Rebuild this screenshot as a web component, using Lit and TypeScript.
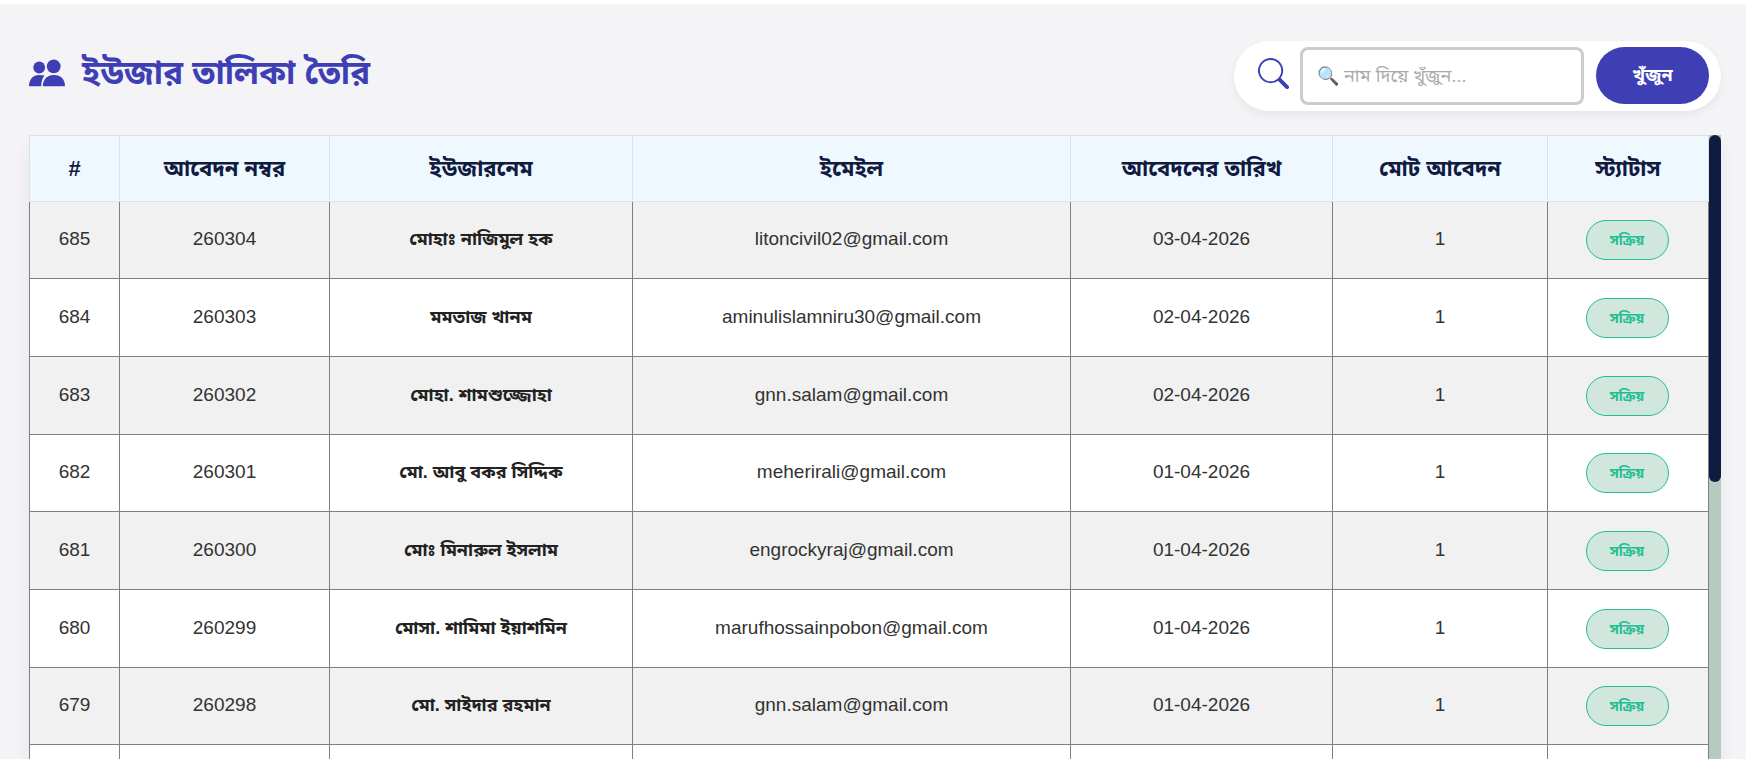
import { LitElement, html, css } from "lit";
import { customElement, property } from "lit/decorators.js";

interface User {
  id: number;
  application: number;
  name: string;
  email: string;
  date: string;
  total: number;
}

const users: User[] = [
  { id: 685, application: 260304, name: "মোহাঃ নাজিমুল হক", email: "litoncivil02@gmail.com", date: "03-04-2026", total: 1 },
  { id: 684, application: 260303, name: "মমতাজ খানম", email: "aminulislamniru30@gmail.com", date: "02-04-2026", total: 1 },
  { id: 683, application: 260302, name: "মোহা. শামশুজ্জোহা", email: "gnn.salam@gmail.com", date: "02-04-2026", total: 1 },
  { id: 682, application: 260301, name: "মো. আবু বকর সিদ্দিক", email: "meherirali@gmail.com", date: "01-04-2026", total: 1 },
  { id: 681, application: 260300, name: "মোঃ মিনারুল ইসলাম", email: "engrockyraj@gmail.com", date: "01-04-2026", total: 1 },
  { id: 680, application: 260299, name: "মোসা. শামিমা ইয়াশমিন", email: "marufhossainpobon@gmail.com", date: "01-04-2026", total: 1 },
  { id: 679, application: 260298, name: "মো. সাইদার রহমান", email: "gnn.salam@gmail.com", date: "01-04-2026", total: 1 },
];

@customElement("user-search")
export class UserSearch extends LitElement {
  static styles = css`
    :host { display: block; }
    .search {
      display: flex;
      align-items: flex-start;
      padding: 6px 12px 6px 24px;
      background: #fff;
      border-radius: 50px;
      box-shadow: 0 4px 10px rgba(0, 0, 0, 0.06);
    }
    .icon { display: flex; align-items: center; width: 32px; height: 52px; margin-right: 10px; color: #3f3fb5; }
    .box {
      box-sizing: border-box;
      width: 284px;
      height: 58px;
      margin-right: 12px;
      padding: 0 14px;
      border: 3px solid #ccc;
      border-radius: 8px;
      background: #fff;
      font: 18px "Liberation Sans", "Noto Sans Bengali", sans-serif;
      color: #333;
    }
    .box::placeholder { color: #aaa; }
    .go {
      width: 113px;
      height: 57px;
      border: 0;
      border-radius: 30px;
      background: #3f3fb5;
      color: #fff;
      font: bold 18px "Liberation Sans", "Noto Sans Bengali", sans-serif;
      cursor: pointer;
    }
  `;

  render() {
    return html`
      <form class="search" role="search" @submit=${(e: Event) => e.preventDefault()}>
        <label class="icon" for="name" aria-label="নাম">
          <svg viewBox="0 0 16 16" width="31" height="31" fill="currentColor" aria-hidden="true">
            <path d="M11.742 10.344a6.5 6.5 0 1 0-1.397 1.398h-.001q.044.06.098.115l3.85 3.85a1 1 0 0 0 1.415-1.414l-3.85-3.85a1 1 0 0 0-.115-.1zM12 6.5a5.5 5.5 0 1 1-11 0 5.5 5.5 0 0 1 11 0" />
          </svg>
        </label>
        <input class="box" id="name" type="text" placeholder="🔍 নাম দিয়ে খুঁজুন..." />
        <button class="go" type="submit">খুঁজুন</button>
      </form>
    `;
  }
}

@customElement("user-table")
export class UserTable extends LitElement {
  @property({ attribute: false }) users: User[] = [];

  static styles = css`
    :host { display: flex; box-shadow: 0 8px 16px rgba(0, 0, 0, 0.06); }
    .view { flex: 1; min-width: 0; overflow: hidden; background: #fff; }
    table { width: 100%; border-collapse: collapse; table-layout: fixed; text-align: center; }
    .id { width: 90px; }
    .application { width: 210px; }
    .name { width: 303px; }
    .date { width: 262px; }
    .total { width: 215px; }
    .status { width: 161px; }
    th {
      height: 65px;
      padding: 0;
      border: 1px solid #dee2e6;
      background: #f0f8ff;
      color: #101b42;
      font-size: 22px;
      line-height: 32px;
    }
    td {
      box-sizing: border-box;
      height: 78px;
      padding: 0 0 2px;
      border: 1px solid #7b8087;
      color: #333;
      font-size: 19px;
      line-height: 28px;
    }
    tr:nth-child(3n + 1) td { height: 77px; }
    tbody tr:nth-child(odd) { background: #f1f1f1; }
    .user { color: #222; font-weight: bold; font-size: 18px; }
    .state { padding: 0 2px 0 0; }
    .badge {
      display: inline-block;
      box-sizing: border-box;
      width: 83px;
      padding: 5px 0;
      border: 1px solid #24be92;
      border-radius: 20px;
      background: #d1e7dd;
      color: #24be92;
      font-size: 14px;
      font-weight: bold;
      line-height: 28px;
      vertical-align: middle;
    }
    .track { width: 12px; background: #b5cbc0; }
    .thumb { height: 347px; border-radius: 6px; background: #101b42; }
  `;

  render() {
    return html`
      <div class="view">
        <table>
          <colgroup>
            <col class="id" /><col class="application" /><col class="name" /><col />
            <col class="date" /><col class="total" /><col class="status" />
          </colgroup>
          <thead>
            <tr>
              <th scope="col">#</th>
              <th scope="col">আবেদন নম্বর</th>
              <th scope="col">ইউজারনেম</th>
              <th scope="col">ইমেইল</th>
              <th scope="col">আবেদনের তারিখ</th>
              <th scope="col">মোট আবেদন</th>
              <th scope="col">স্ট্যাটাস</th>
            </tr>
          </thead>
          <tbody>
            ${this.users.map(
              (u) => html`
                <tr>
                  <td>${u.id}</td>
                  <td>${u.application}</td>
                  <td class="user">${u.name}</td>
                  <td>${u.email}</td>
                  <td>${u.date}</td>
                  <td>${u.total}</td>
                  <td class="state"><span class="badge">সক্রিয়</span></td>
                </tr>
              `
            )}
            <tr><td></td><td></td><td></td><td></td><td></td><td></td><td></td></tr>
          </tbody>
        </table>
      </div>
      <div class="track"><div class="thumb"></div></div>
    `;
  }
}

@customElement("app-root")
export class AppRoot extends LitElement {
  static styles = css`
    :host {
      display: flex;
      flex-direction: column;
      box-sizing: border-box;
      height: 100vh;
      overflow: hidden;
      padding: 37px 25px 0 29px;
      border-top: 4px solid #fff;
      background: #f4f4f7;
      font-family: "Liberation Sans", "Noto Sans Bengali", sans-serif;
    }
    .head { display: flex; align-items: flex-start; justify-content: space-between; margin-bottom: 24px; }
    .title {
      display: flex;
      align-items: center;
      gap: 17px;
      margin: 0;
      color: #3f3fb5;
      font-size: 33px;
      line-height: 64px;
    }
    .list { flex: none; }
  `;

  render() {
    return html`
      <header class="head">
        <h1 class="title">
          <svg viewBox="0 0 36 28" width="36" height="28" fill="currentColor" aria-hidden="true">
            <circle cx="10.200" cy="8.500" r="5.900" />
            <circle cx="24.700" cy="7.300" r="6.900" />
            <path d="M0 27.300C0 20.500 4 16 10 16Q13 16 15.600 16.600Q12.300 20.500 12.200 27.300Z" />
            <path d="M13.800 27.300C13.800 20.500 18 16 25 16S36 20.500 36 27.300Z" />
          </svg>
          <span>ইউজার তালিকা তৈরি</span>
        </h1>
        <user-search></user-search>
      </header>
      <user-table class="list" .users=${users}></user-table>
    `;
  }
}
